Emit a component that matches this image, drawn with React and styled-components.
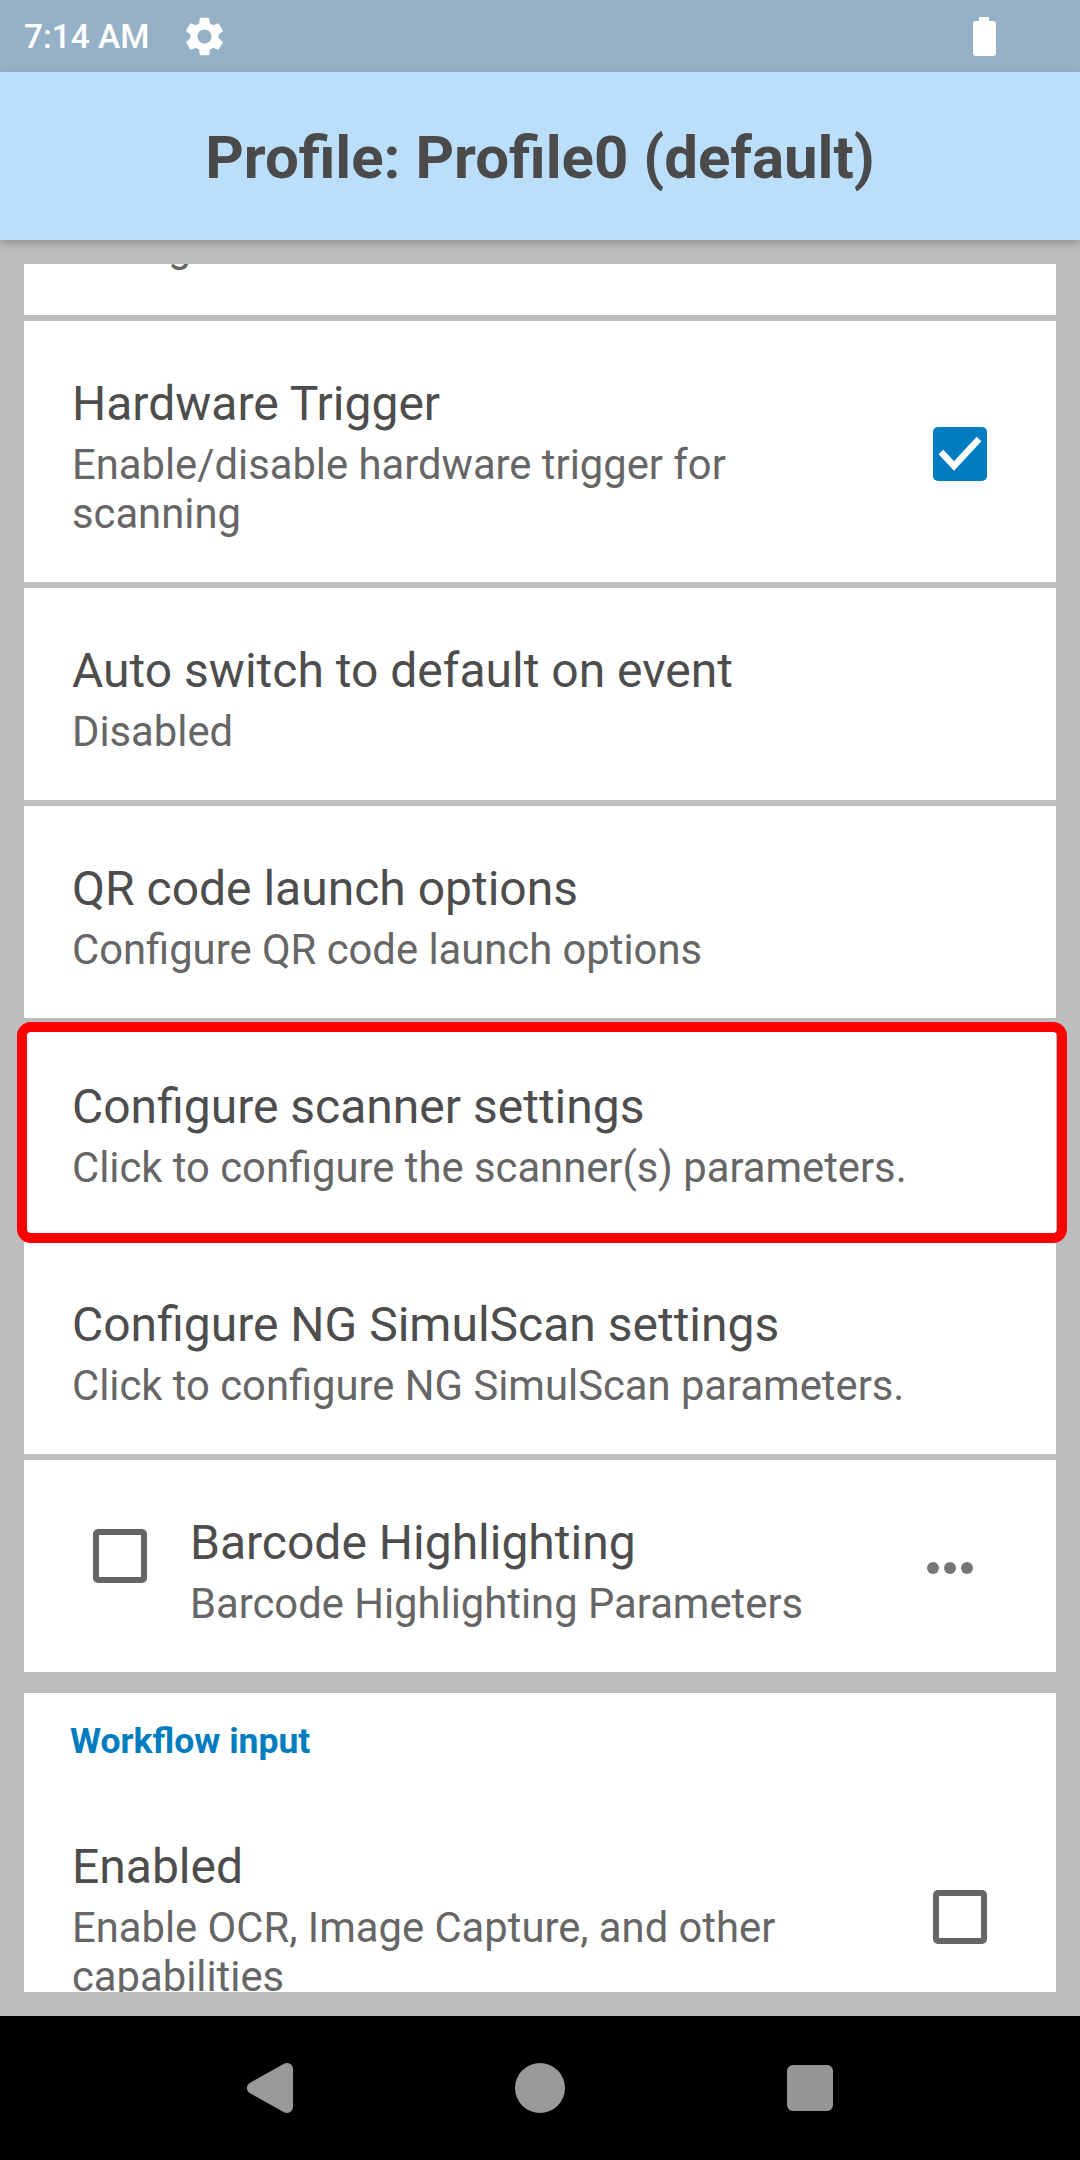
import React from "react";
import styled, { createGlobalStyle } from "styled-components";

const Global = createGlobalStyle`
  html, body { margin: 0; padding: 0; background: #bdbdbd; }
  * { box-sizing: border-box; }
`;

const Screen = styled.div`
  width: 1080px;
  height: 2160px;
  display: flex;
  flex-direction: column;
  overflow: hidden;
  background: #bdbdbd;
  font-family: Roboto, "Liberation Sans", sans-serif;
`;

const StatusBar = styled.div`
  height: 72px;
  flex: none;
  background: #95b1c8;
  display: flex;
  align-items: center;
  padding: 0 84px 0 24px;
  color: #fff;
`;

const Clock = styled.span`
  font-size: 33.4px;
  font-weight: 500;
  line-height: 72px;
  margin: 2px 32px 0 0;
`;

const BatteryIcon = styled.svg`
  margin-left: auto;
`;

const Header = styled.header`
  position: relative;
  z-index: 1;
  height: 168px;
  flex: none;
  padding-top: 4px;
  background: #bbdefb;
  display: flex;
  align-items: center;
  justify-content: center;
  box-shadow: 0 4px 8px rgba(0, 0, 0, 0.22);
`;

const HeaderTitle = styled.h1`
  margin: 0;
  font-size: 60px;
  font-weight: 700;
  line-height: 70px;
  color: #4a4a4a;
`;

const Viewport = styled.main`
  flex: 1;
  min-height: 0;
  margin: 24px 0;
  padding: 0 24px;
  overflow: hidden;
`;

const List = styled.div`
  margin-top: -161px;
  display: flex;
  flex-direction: column;
  gap: 6px;
`;

const Card = styled.section`
  position: relative;
  background: #fff;
  margin-top: ${(p) => p.$gapBefore || 0}px;
`;

const Row = styled.div`
  position: relative;
  background: #fff;
  display: flex;
  align-items: flex-start;
  padding: 55px 69px 44px ${(p) => p.$indent || 48}px;
`;

const RowText = styled.div`
  flex: 1;
  min-width: 0;
`;

const Title = styled.div`
  font-size: 48px;
  line-height: 56px;
  color: #4d4d4d;
`;

const Sub = styled.div`
  margin-top: 8px;
  font-size: 41.75px;
  line-height: 49px;
  color: #666;
  max-width: ${(p) => (p.$narrow ? "760px" : "none")};
`;

const SectionLabel = styled.div`
  padding: 27px 46px 22px 46px;
  font-size: 35.5px;
  font-weight: 700;
  line-height: 42px;
  color: #007cc0;
`;

const Box = styled.span`
  flex: none;
  display: block;
  width: 54px;
  height: 54px;
  margin-top: ${(p) => p.$top}px;
  border-radius: 5px;
  background: ${(p) => (p.$checked ? "#007cc0" : "#fff")};
  border: ${(p) => (p.$checked ? "none" : "6px solid #666")};
`;

const LeadingBox = styled(Box)`
  margin-right: 43px;
`;

const Dots = styled.span`
  flex: none;
  display: flex;
  gap: 5px;
  margin: ${(p) => p.$top}px 14px 0 0;
`;

const Dot = styled.i`
  display: block;
  width: 12px;
  height: 12px;
  border-radius: 50%;
  background: #757575;
`;

const Highlight = styled.div`
  position: absolute;
  top: -2px;
  bottom: -7px;
  left: -7px;
  right: -11px;
  border: 10px solid #ff0000;
  border-radius: 14px;
  pointer-events: none;
  z-index: 2;
`;

const NavBar = styled.nav`
  height: 144px;
  flex: none;
  background: #000;
  display: flex;
  justify-content: center;
  align-items: center;
`;

const NavSlot = styled.div`
  width: 270px;
  display: flex;
  justify-content: center;
`;

const Back = styled.svg``;

const Home = styled.span`
  display: block;
  width: 50px;
  height: 50px;
  border-radius: 50%;
  background: #999;
`;

const Recents = styled.span`
  display: block;
  width: 46px;
  height: 46px;
  border-radius: 6px;
  background: #969696;
`;

const gear =
  "M19.14 12.94c.04-.3.06-.61.06-.94 0-.32-.02-.64-.07-.94l2.03-1.58c.18-.14.23-.41.12-.61l-1.92-3.32c-.12-.22-.37-.29-.59-.22l-2.39.96c-.5-.38-1.03-.7-1.62-.94l-.36-2.54c-.04-.24-.24-.41-.48-.41h-3.84c-.24 0-.43.17-.47.41l-.36 2.54c-.59.24-1.13.57-1.62.94l-2.39-.96c-.22-.08-.47 0-.59.22L2.74 8.87c-.12.21-.08.47.12.61l2.03 1.58c-.05.3-.09.63-.09.94s.02.64.07.94l-2.03 1.58c-.18.14-.23.41-.12.61l1.92 3.32c.12.22.37.29.59.22l2.39-.96c.5.38 1.03.7 1.62.94l.36 2.54c.05.24.24.41.48.41h3.84c.24 0 .44-.17.47-.41l.36-2.54c.59-.24 1.13-.56 1.62-.94l2.39.96c.22.08.47 0 .59-.22l1.92-3.32c.12-.22.07-.47-.12-.61l-2.01-1.58zM12 15.6c-1.98 0-3.6-1.62-3.6-3.6s1.62-3.6 3.6-3.6 3.6 1.62 3.6 3.6-1.62 3.6-3.6 3.6z";

const Check = () => (
  <svg width="54" height="54" viewBox="0 0 54 54" style={{ display: "block" }}>
    <path d="M8 25 L21 39 L46 12" fill="none" stroke="#fff" strokeWidth="6.5" />
  </svg>
);

export default function App() {
  return (
    <Screen>
      <Global />
      <StatusBar>
        <Clock>7:14 AM</Clock>
        <svg width="47" height="47" viewBox="0 0 24 24" fill="#fff">
          <path d={gear} />
        </svg>
        <BatteryIcon width="23" height="39" viewBox="0 0 23 39" fill="#fff">
          <path d="M6 0h10v4h4a3 3 0 0 1 3 3v29a3 3 0 0 1-3 3H3a3 3 0 0 1-3-3V7a3 3 0 0 1 3-3h3z" />
        </BatteryIcon>
      </StatusBar>
      <Header>
        <HeaderTitle>Profile: Profile0 (default)</HeaderTitle>
      </Header>
      <Viewport>
        <List>
          <Row>
            <RowText>
              <Title>Barcode input</Title>
              <Sub>Debug mode</Sub>
            </RowText>
          </Row>
          <Row>
            <RowText>
              <Title>Hardware Trigger</Title>
              <Sub $narrow>Enable/disable hardware trigger for scanning</Sub>
            </RowText>
            <Box $checked $top={51}>
              <Check />
            </Box>
          </Row>
          <Row>
            <RowText>
              <Title>Auto switch to default on event</Title>
              <Sub>Disabled</Sub>
            </RowText>
          </Row>
          <Row>
            <RowText>
              <Title>QR code launch options</Title>
              <Sub>Configure QR code launch options</Sub>
            </RowText>
          </Row>
          <Row>
            <RowText>
              <Title>Configure scanner settings</Title>
              <Sub>Click to configure the scanner(s) parameters.</Sub>
            </RowText>
            <Highlight />
          </Row>
          <Row>
            <RowText>
              <Title>Configure NG SimulScan settings</Title>
              <Sub>Click to configure NG SimulScan parameters.</Sub>
            </RowText>
          </Row>
          <Row $indent={69}>
            <LeadingBox $top={14} />
            <RowText>
              <Title>Barcode Highlighting</Title>
              <Sub>Barcode Highlighting Parameters</Sub>
            </RowText>
            <Dots $top={47}>
              <Dot />
              <Dot />
              <Dot />
            </Dots>
          </Row>
          <Card $gapBefore={15}>
            <SectionLabel>Workflow input</SectionLabel>
            <Row>
              <RowText>
                <Title>Enabled</Title>
                <Sub $narrow>Enable OCR, Image Capture, and other capabilities</Sub>
              </RowText>
              <Box $top={51} />
            </Row>
          </Card>
        </List>
      </Viewport>
      <NavBar>
        <NavSlot>
          <Back width="46" height="50" viewBox="0 0 46 50" fill="#999" stroke="#999" strokeWidth="12" strokeLinejoin="round">
            <path d="M6 25 L40 6 V44 Z" />
          </Back>
        </NavSlot>
        <NavSlot>
          <Home />
        </NavSlot>
        <NavSlot>
          <Recents />
        </NavSlot>
      </NavBar>
    </Screen>
  );
}
